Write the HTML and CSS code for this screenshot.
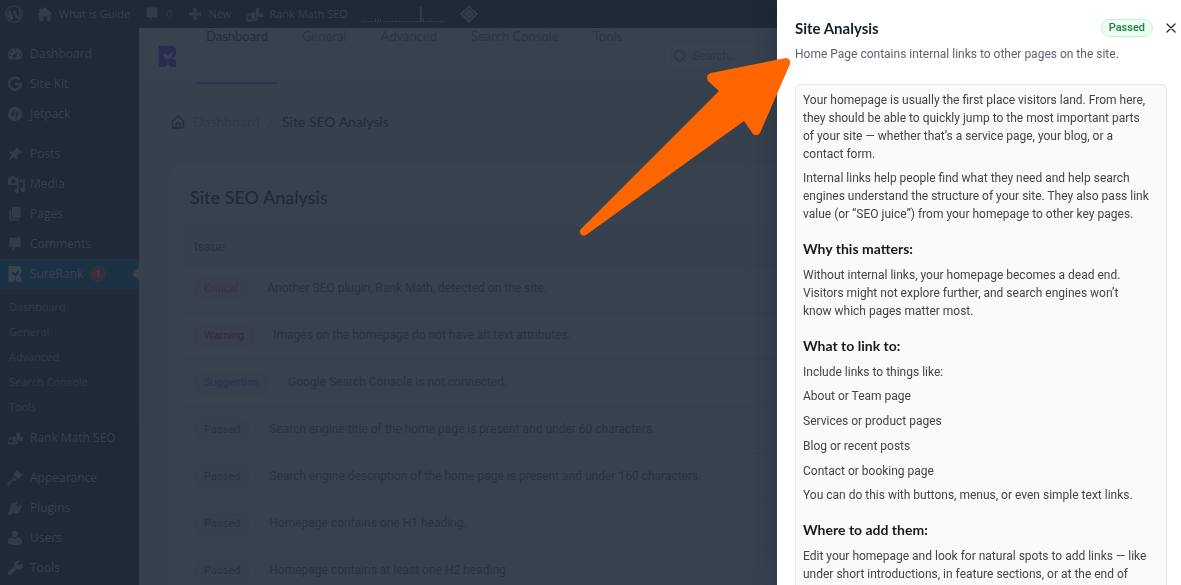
FILE: index.html
```html
<!DOCTYPE html>
<html lang="en">
<head>
<meta charset="utf-8">
<title>Site SEO Analysis</title>
<link rel="stylesheet" href="styles.css">
</head>
<body>
<svg class="defs" aria-hidden="true">
  <symbol id="i-comment" viewBox="0 0 20 20"><path d="M3 2h14v12h-6l-4 5v-5H3z"/></symbol>
  <symbol id="i-rank" viewBox="0 0 20 20"><path d="M3 12h3v4H3zM7 8h4v8H7zM12 3h4v12h-4zM6 8l-4 3v4H1v3c5 1 13 0 17-5l2 1V8l-5 2 2 1c-4 4-8 5-11 4z"/></symbol>
  <symbol id="i-sure" viewBox="0 0 20 22"><path fill-rule="evenodd" d="M1 0h12q6 0 6 6 0 5-4 7 4 1 4 5v4h-4q-4 0-4-4v-4.500q4-.5 4.500-6.500-4 0-5 3.500-1-2.500-5-2.500 0 5 4.500 5.500V17q0 5-5 5H1z"/></symbol>
</svg>

<div class="screen">
  <header class="adminbar">
    <a class="bar-logo" href="#" aria-label="WordPress"><svg class="ic18" viewBox="0 0 20 20"><circle cx="10" cy="10" r="9" fill="none" stroke="currentColor" stroke-width="1.4"/><path d="M3 6.500h4l-.8.5L9 14l1.300-4-1.200-3-.8-.5h4.400l-.8.5 2.700 7 1.300-5q0-2-1.300-3.500l.5-1A7.500 7.500 0 0 1 14 16.500l-3.700-5.500L8 17l-2-.7z"/><path d="M2.500 8l3.500 8a7.500 7.500 0 0 1-3.500-8z"/></svg></a>
    <a class="bar-item" href="#"><svg class="ic16" viewBox="0 0 20 20"><path d="M10 1l9 9-1.500 1.500L17 11v8h-5v-6H8v6H3v-8l-.5.5L1 10l2-2V3h3v2z"/></svg><span>What is Guide</span></a>
    <a class="bar-item faint" href="#"><svg class="ic16"><use href="#i-comment"/></svg><span>0</span></a>
    <a class="bar-item bar-new" href="#"><svg class="ic14" viewBox="0 0 14 14"><path d="M5.500 1h3v4.500H13v3H8.500V13h-3V8.500H1v-3h4.500z"/></svg><span>New</span></a>
    <a class="bar-item" href="#"><svg class="ic18"><use href="#i-rank"/></svg><span>Rank Math SEO</span></a>
    <svg class="spark" viewBox="0 0 84 16"><path d="M0 15.500h84" fill="none" stroke="currentColor" stroke-dasharray="2 1"/><path d="M13 13h1v3h-1zM16 12h1v4h-1zM18 13h1v3h-1zM34 14h1v2h-1zM58 1h2v15h-2zM61 13h1v3h-1zM69 14h1v2h-1z"/></svg>
    <svg class="ic18" viewBox="0 0 20 20"><path fill-rule="evenodd" d="M10 0l10 10-10 10L0 10zM10 3l-7 7 7 7 7-7z"/><path d="M10 4l6 6-6 6-6-6z"/></svg>
  </header>

  <div class="body">
    <nav class="sidebar" aria-label="Admin menu">
      <ul class="menu">
        <li><a href="#"><svg class="ic16" viewBox="0 0 20 20"><path fill-rule="evenodd" d="M3 17a9 9 0 1 1 14 0zM9 5h2V3H9zM4 8h2V6H4zM2.500 12h2v-2h-2zM15.500 12h2v-2h-2zM14 6l-5 5a2 2 0 1 0 2 2z"/></svg>Dashboard</a></li>
        <li><a href="#"><svg class="ic16" viewBox="0 0 20 20"><path fill="none" stroke="currentColor" stroke-width="3.500" d="M15.500 4.500A7.500 7.500 0 1 0 17.500 10H10"/></svg>Site Kit</a></li>
        <li><a href="#"><svg class="ic16" viewBox="0 0 20 20"><path fill-rule="evenodd" d="M10 1a9 9 0 1 1 0 18 9 9 0 0 1 0-18zM9 3l-4 9h4zM11 8v9l4-9z"/></svg>Jetpack</a></li>
      </ul>
      <ul class="menu">
        <li><a href="#"><svg class="ic16" viewBox="0 0 20 20"><path d="M12 1l7 7-2 1-1-.5-3 3.500q1 3-1 4.500l-3-3L1 19l5-8-3-3q2-2 5-1l3-3z"/></svg>Posts</a></li>
        <li><a href="#"><svg class="ic18" viewBox="0 0 20 20"><path fill-rule="evenodd" d="M1 3h2l1-2h4l1 2h4v8H1zM7 4.500a2.500 2.500 0 1 0 0 5 2.500 2.500 0 0 0 0-5z"/><path d="M14 5h6v11a2.500 2.500 0 1 1-2-2V8h-4zM11 12h2v5a2.500 2.500 0 1 1-2-2z"/></svg>Media</a></li>
        <li><a href="#"><svg class="ic16" viewBox="0 0 20 20"><path d="M6 1h11v14H6zM3 4h2v12h10v2H3z"/></svg>Pages</a></li>
        <li><a href="#"><svg class="ic16"><use href="#i-comment"/></svg>Comments</a></li>
        <li><a class="active" href="#"><svg class="ic16"><use href="#i-sure"/></svg>SureRank<span class="count">1</span></a>
          <ul class="submenu">
            <li><a href="#">Dashboard</a></li>
            <li><a href="#">General</a></li>
            <li><a href="#">Advanced</a></li>
            <li><a href="#">Search Console</a></li>
            <li><a href="#">Tools</a></li>
          </ul>
        </li>
        <li><a href="#"><svg class="ic16"><use href="#i-rank"/></svg>Rank Math SEO</a></li>
      </ul>
      <ul class="menu">
        <li><a href="#"><svg class="ic16" viewBox="0 0 20 20"><path d="M9 3l3-2 8 5-6 6-6-6zM7 7l6 6-3 1-3-1-4 6q-2 1-3-1l1-2 6-4z"/></svg>Appearance</a></li>
        <li><a href="#"><svg class="ic16" viewBox="0 0 20 20"><path d="M12 1l2 2-3 3 3 3 3-3 2 2-3 3 1 2q-4 6-9 3l-4 3H1v-3l3-3Q2 8 7 3l2 1z"/></svg>Plugins</a></li>
        <li><a href="#"><svg class="ic16" viewBox="0 0 20 20"><circle cx="10" cy="5" r="4"/><path d="M6 9l4 2 4-2q5 1 5 5v3q-9 4-18 0v-3q0-4 5-5z"/></svg>Users</a></li>
        <li><a href="#"><svg class="ic16" viewBox="0 0 20 20"><path d="M17 1l-4 4 2 2 4-3q2 7-4 8l-3-.5L5 19q-2 1-3.500-.5T1 15l8-7q-1-6 4-7z"/></svg>Tools</a></li>
      </ul>
    </nav>

    <main class="main">
      <div class="topnav">
        <svg class="brand" role="img" aria-label="SureRank"><use href="#i-sure"/></svg>
        <nav class="tabs" aria-label="Sections">
          <a class="tab current" href="#">Dashboard</a>
          <a class="tab" href="#">General</a>
          <a class="tab" href="#">Advanced</a>
          <a class="tab" href="#">Search Console</a>
          <a class="tab" href="#">Tools</a>
        </nav>
        <label class="search"><svg class="ic14" viewBox="0 0 14 14"><g fill="none" stroke="currentColor" stroke-linecap="round"><circle cx="6.500" cy="6.500" r="5"/><path d="M10 10l3 3"/></g></svg><input type="search" placeholder="Search..." aria-label="Search"></label>
      </div>

      <nav class="crumbs" aria-label="Breadcrumb">
        <svg class="ic14" viewBox="0 0 14 14"><path fill="none" stroke="currentColor" stroke-width="1.300" stroke-linejoin="round" d="M1.500 5.500L7 1.200l5.500 4.300v6q0 1.500-1.500 1.500H3q-1.500 0-1.500-1.500zM5 13V9q0-1 1-1h2q1 0 1 1v4"/></svg>
        <a href="#">Dashboard</a><span class="slash">/</span><span class="here">Site SEO Analysis</span>
      </nav>

      <section class="card">
        <h1>Site SEO Analysis</h1>
        <table class="issues">
          <thead><tr><th scope="col">Issue</th></tr></thead>
          <tbody>
            <tr><td><span class="pill critical">Critical</span>Another SEO plugin, Rank Math, detected on the site.</td></tr>
            <tr><td><span class="pill warning">Warning</span>Images on the homepage do not have alt text attributes.</td></tr>
            <tr><td><span class="pill suggestion">Suggestion</span>Google Search Console is not connected.</td></tr>
            <tr><td><span class="pill passed">Passed</span>Search engine title of the home page is present and under 60 characters.</td></tr>
            <tr><td><span class="pill passed">Passed</span>Search engine description of the home page is present and under 160 characters.</td></tr>
            <tr><td><span class="pill passed">Passed</span>Homepage contains one H1 heading.</td></tr>
            <tr><td><span class="pill passed">Passed</span>Homepage contains at least one H2 heading</td></tr>
          </tbody>
        </table>
      </section>
    </main>
  </div>
</div>

<aside class="drawer" aria-labelledby="drawer-title">
  <div class="drawer-head">
    <h2 id="drawer-title">Site Analysis</h2>
    <span class="status">Passed</span>
    <button class="close" type="button" aria-label="Close"><svg class="ic14" viewBox="0 0 14 14"><path fill="none" stroke="currentColor" stroke-width="1.300" stroke-linecap="round" d="M3 3l8 8M11 3l-8 8"/></svg></button>
  </div>
  <p class="summary">Home Page contains internal links to other pages on the site.</p>
  <div class="details">
    <p>Your homepage is usually the first place visitors land. From here,<br>they should be able to quickly jump to the most important parts<br>of your site — whether that’s a service page, your blog, or a<br>contact form.</p>
    <p>Internal links help people find what they need and help search<br>engines understand the structure of your site. They also pass link<br>value (or “SEO juice”) from your homepage to other key pages.</p>
    <h3>Why this matters:</h3>
    <p>Without internal links, your homepage becomes a dead end.<br>Visitors might not explore further, and search engines won’t<br>know which pages matter most.</p>
    <h3>What to link to:</h3>
    <p>Include links to things like:</p>
    <ul>
      <li>About or Team page</li>
      <li>Services or product pages</li>
      <li>Blog or recent posts</li>
      <li>Contact or booking page</li>
    </ul>
    <p>You can do this with buttons, menus, or even simple text links.</p>
    <h3>Where to add them:</h3>
    <p>Edit your homepage and look for natural spots to add links — like<br>under short introductions, in feature sections, or at the end of</p>
  </div>
</aside>

<svg class="arrow" viewBox="0 0 212 180" aria-hidden="true"><path d="M2 171L140 33 129 23Q126 17 132 15L207 0Q212 1 211 6L181 75Q178 79 174 76L165 63 7 177Q3 179 1 175 0 173 2 171z"/></svg>
</body>
</html>
```
FILE: styles.css
```css
* { box-sizing: border-box; }
html, body { height: 100%; }
body {
  margin: 0;
  overflow: hidden;
  background: #36414d;
  font-family: Roboto, "Liberation Sans", sans-serif;
  font-size: 12px;
  line-height: 18px;
}
ul { list-style: none; margin: 0; padding: 0; }
a { color: inherit; text-decoration: none; }
svg { flex: none; fill: currentColor; }
.defs { position: absolute; width: 0; height: 0; }
.ic14 { width: 14px; height: 14px; }
.ic16 { width: 16px; height: 16px; }
.ic18 { width: 18px; height: 18px; }

.tabs, .crumbs, .card h1, .drawer h2, .drawer h3 { font-family: Lato, "Liberation Sans", sans-serif; }

.screen { display: flex; flex-direction: column; height: 100%; overflow: hidden; }
.adminbar, .sidebar {
  background: #1f2937;
  color: #364150;
  font-family: "Open Sans", "Noto Sans", sans-serif;
}
.adminbar svg, .menu svg { color: #303c49; }
.adminbar { display: flex; align-items: center; flex: none; height: 28px; padding-left: 5px; gap: 14px; font-size: 11px; }
.bar-logo, .bar-item { display: flex; align-items: center; gap: 6px; white-space: nowrap; }
.faint span { color: #2c3745; }
.bar-new { margin-left: 2px; }
.spark { width: 84px; height: 16px; }

.body { display: flex; flex: 1; min-height: 0; }
.sidebar { flex: none; width: 139px; padding-top: 1px; }
.menu { padding-top: 10px; }
.menu > li > a { display: flex; align-items: center; gap: 7px; height: 30px; padding-left: 7px; }
.menu .ic18 { margin-right: -2px; }
.menu > li > .active { position: relative; background: #1d3144; }
.menu .active svg { color: #364452; }
.active::after {
  content: "";
  position: absolute;
  right: 0;
  top: 8px;
  border: 7px solid transparent;
  border-left-width: 0;
  border-right-color: #36414d;
}
.count {
  width: 16px;
  height: 16px;
  border-radius: 8px;
  background: #382f3d;
  color: #484652;
  font-size: 10px;
  line-height: 16px;
  text-align: center;
}
.submenu { padding: 5px 0 4px 9px; background: #202b37; color: #303c49; font-size: 11px; line-height: 25px; }
.submenu a { display: block; }

.main { flex: 1; min-width: 0; color: #28333f; }
.topnav { display: flex; height: 57px; padding-left: 18px; border-bottom: 1px solid #343f4b; background: #37424e; }
.brand { width: 21px; height: 21px; margin-top: 18px; color: #282c51; }
.tabs { display: flex; gap: 14px; margin-left: 18px; color: #2b3642; font-size: 13px; line-height: 16px; }
.tab { padding: 0 10px; white-space: nowrap; }
.current { border-bottom: 2px solid #2c3551; color: #222d3b; }
.search {
  display: flex;
  flex: 1;
  align-items: center;
  gap: 5px;
  height: 30px;
  margin: 13px 16px 0 32px;
  padding-left: 8px;
  border: 1px solid #343f4b;
  border-radius: 4px;
  color: #2a3543;
}
.search input { flex: 1; min-width: 0; padding: 0; border: 0; outline: 0; background: none; color: inherit; font: inherit; }
.search input::placeholder { color: #2c3744; opacity: 1; }

.crumbs { display: flex; align-items: center; gap: 8px; padding: 27px 0 0 32px; color: #222d3b; font-size: 14px; line-height: 20px; }
.crumbs a, .slash { color: #2f3a47; }
.here { color: #212c3a; }

.card { margin: 30px 28px 0 29px; padding: 22px 14px; border: 1px solid #35404c; border-radius: 8px; background: #37424e; }
.card h1 { margin: 0 0 18px; padding-left: 7px; color: #1f2a38; font-size: 18px; font-weight: 500; line-height: 24px; }
.issues { width: 100%; border: 1px solid #35404c; border-spacing: 0; }
.issues th { height: 37px; padding: 0 10px; font-size: 13px; font-weight: 400; text-align: left; background: #36414d; }
.issues td { height: 47px; padding: 0 10px; border-top: 1px solid #343f4b; white-space: nowrap; }
.pill {
  display: inline-block;
  margin-right: 19px;
  padding: 0 9px;
  border: 1px solid;
  border-radius: 11px;
  font-size: 11px;
  line-height: 20px;
}
.critical { background: #38404d; border-color: #393e4b; color: #3a303e; }
.warning { background: #37404b; border-color: #373f48; color: #302f37; }
.suggestion { background: #35414f; border-color: #33404f; color: #273448; }
.passed { background: #35424d; border-color: #33414c; color: #25343c; }

.drawer {
  position: fixed;
  inset: 0 0 0 auto;
  width: 404px;
  max-width: 100%;
  padding: 18px 14px 0 18px;
  overflow: hidden;
  background: #fff;
  box-shadow: 0 0 24px rgba(17, 24, 39, 0.3);
}
.drawer-head { display: flex; align-items: center; height: 20px; }
.drawer-head h2 { flex: 1; margin: 0; color: #151d2b; font-size: 15px; font-weight: 700; line-height: 20px; }
.status {
  padding: 0 7px;
  border: 1px solid #bbf7d0;
  border-radius: 9px;
  background: #f0fdf4;
  color: #1b8040;
  font-size: 11px;
  font-weight: 500;
  line-height: 16px;
}
.close { display: flex; margin: 0 -11px 0 11px; padding: 0; border: 0; background: none; color: #1f2937; }
.summary { margin: 7px 0 21px; color: #5a6372; }
.details { padding: 6px 7px; border: 1px solid #e5e7eb; border-radius: 5px; background: #f9fafb; color: #41444b; white-space: nowrap; }
.details p { margin: 0 0 6px; }
.details h3 { margin: 16px 0 7px; color: #17191d; font-size: 14px; font-weight: 700; line-height: 20px; }
.details ul { display: grid; gap: 7px; margin-bottom: 6px; }

.arrow { position: fixed; top: 58px; right: 390px; width: 212px; height: 180px; color: #ff6500; }
```
